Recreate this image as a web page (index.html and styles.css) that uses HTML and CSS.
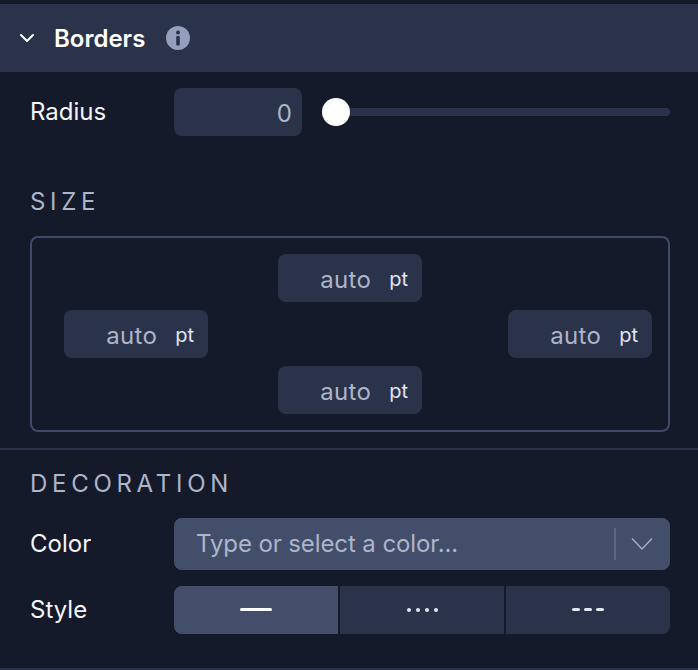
FILE: index.html
```html
<html>

<head>
    <link rel="stylesheet" href="styles.css">
</head>

<body>
    <div class="panel">
        <div class="panel-header">
            <svg class="caret" width="16" height="10" viewBox="0 0 16 10">
                <path d="M2 2l6 6 6-6" fill="none" stroke="#fff" stroke-width="2" stroke-linecap="round" stroke-linejoin="round" />
            </svg>
            <h2 class="panel-title">Borders</h2>
            <svg class="info" width="24" height="24" viewBox="0 0 24 24">
                <circle cx="12" cy="12" r="12" fill="#949fbd" />
                <circle cx="12" cy="6.6" r="2" fill="#2a3349" />
                <rect x="10.2" y="10" width="3.6" height="9.5" rx="1" fill="#2a3349" />
            </svg>
        </div>

        <div class="radius-row">
            <label class="field-label">Radius</label>
            <div class="num-input">0</div>
            <div class="slider">
                <span class="slider-thumb"></span>
                <span class="slider-track"></span>
            </div>
        </div>

        <div class="section-size">
            <h3 class="section-title">SIZE</h3>
            <div class="size-box">
                <div class="size-input size-top"><span class="size-value">auto</span><span class="size-unit">pt</span></div>
                <div class="size-input size-left"><span class="size-value">auto</span><span class="size-unit">pt</span></div>
                <div class="size-input size-right"><span class="size-value">auto</span><span class="size-unit">pt</span></div>
                <div class="size-input size-bottom"><span class="size-value">auto</span><span class="size-unit">pt</span></div>
            </div>
        </div>

        <div class="section-decoration">
            <h3 class="section-title">DECORATION</h3>
            <div class="field-row color-row">
                <label class="field-label">Color</label>
                <div class="color-select">
                    <span class="color-placeholder">Type or select a color...</span>
                    <span class="color-sep"></span>
                    <svg class="color-caret" width="22" height="14" viewBox="0 0 22 14">
                        <path d="M1 1.5l10 10.500 10-10.500" fill="none" stroke="#a5aec5" stroke-width="1.500" />
                    </svg>
                </div>
            </div>
            <div class="field-row style-row">
                <label class="field-label">Style</label>
                <div class="style-group">
                    <div class="style-btn is-active"><span class="line-solid"></span></div>
                    <div class="style-btn">
                        <span class="dot"></span><span class="dot"></span><span class="dot"></span><span class="dot"></span>
                    </div>
                    <div class="style-btn btn-dashed">
                        <span class="dash"></span><span class="dash"></span><span class="dash"></span>
                    </div>
                </div>
            </div>
        </div>
    </div>
</body>

</html>
```

FILE: styles.css
```css
* {
    box-sizing: border-box;
}

body {
    margin: 0;
    background: #141a29;
    font-family: 'Inter', sans-serif;
}

h2,
h3 {
    margin: 0;
    font-weight: normal;
}

.panel {
    width: 698px;
    height: 670px;
    padding-top: 4px;
    border-bottom: 2px solid #2a3349;
}

.panel-header {
    display: flex;
    align-items: center;
    height: 68px;
    padding-left: 19px;
    background: #2a3349;
}

.panel-title {
    margin-left: 19px;
    color: #fff;
    font-size: 24px;
    font-weight: 600;
}

.info {
    margin-left: 21px;
}

.field-label {
    width: 144px;
    margin-bottom: 1px;
    color: #f4f5f9;
    font-size: 24px;
    line-height: 28px;
    flex-shrink: 0;
}

.radius-row {
    display: flex;
    align-items: center;
    height: 48px;
    margin: 16px 28px 0 30px;
}

.num-input {
    width: 128px;
    height: 48px;
    padding-right: 10px;
    border-radius: 8px;
    background: #2a3349;
    color: #adb5ca;
    font-size: 24px;
    line-height: 52px;
    text-align: right;
}

.slider {
    display: flex;
    align-items: center;
    flex: 1;
    margin-left: 20px;
}

.slider-thumb {
    width: 28px;
    height: 28px;
    border-radius: 50%;
    background: #fff;
    flex-shrink: 0;
}

.slider-track {
    flex: 1;
    height: 8px;
    border-radius: 0 4px 4px 0;
    background: #2a3349;
}

.section-title {
    color: #adb5ca;
    font-size: 24px;
    line-height: 32px;
    letter-spacing: 4.700px;
}

.section-size {
    margin: 50px 28px 0 30px;
    padding-bottom: 16px;
}

.size-box {
    display: grid;
    grid-template-columns: 214px 230px 144px;
    grid-template-rows: 48px 48px 48px;
    row-gap: 8px;
    margin-top: 18px;
    padding: 16px 16px 16px 32px;
    border: 2px solid #3f4a69;
    border-radius: 8px;
}

.size-input {
    display: flex;
    align-items: center;
    justify-content: flex-end;
    width: 144px;
    height: 48px;
    padding: 2px 14px 0 0;
    border-radius: 8px;
    background: #2a3349;
}

.size-top {
    grid-column: 2;
    grid-row: 1;
}

.size-left {
    grid-column: 1;
    grid-row: 2;
}

.size-right {
    grid-column: 3;
    grid-row: 2;
}

.size-bottom {
    grid-column: 2;
    grid-row: 3;
}

.size-value {
    color: #adb5ca;
    font-size: 24px;
    letter-spacing: .3px;
}

.size-unit {
    margin-left: 18px;
    color: #e2e6f0;
    font-size: 20px;
}

.section-decoration {
    padding: 18px 28px 0 30px;
    border-top: 2px solid #2a3349;
}

.field-row {
    display: flex;
    align-items: center;
}

.color-row {
    margin-top: 18px;
}

.style-row {
    margin-top: 16px;
}

.color-select {
    display: flex;
    align-items: center;
    flex: 1;
    height: 52px;
    padding: 0 17px 0 22px;
    border-radius: 8px;
    background: #434e6b;
}

.color-placeholder {
    flex: 1;
    margin-bottom: 1px;
    color: #adb5ca;
    font-size: 24px;
    line-height: 28px;
    letter-spacing: -.1px;
}

.color-sep {
    width: 2px;
    height: 32px;
    background: #5b6787;
}

.color-caret {
    margin-left: 15px;
}

.style-group {
    display: flex;
    flex: 1;
    height: 48px;
    border-radius: 8px;
    overflow: hidden;
    gap: 2px;
}

.style-btn {
    display: flex;
    align-items: center;
    justify-content: center;
    flex: 1;
    gap: 5px;
    background: #2a3349;
}

.style-btn.is-active {
    background: #434e6b;
}

.btn-dashed {
    gap: 4px;
}

.line-solid {
    width: 32px;
    height: 3px;
    margin-top: -1px;
    border-radius: 2px;
    background: #fff;
}

.dot {
    width: 4px;
    height: 4px;
    border-radius: 50%;
    background: #e2e6f0;
}

.dash {
    width: 8px;
    height: 3px;
    margin-top: -1px;
    border-radius: 2px;
    background: #e2e6f0;
}
```
